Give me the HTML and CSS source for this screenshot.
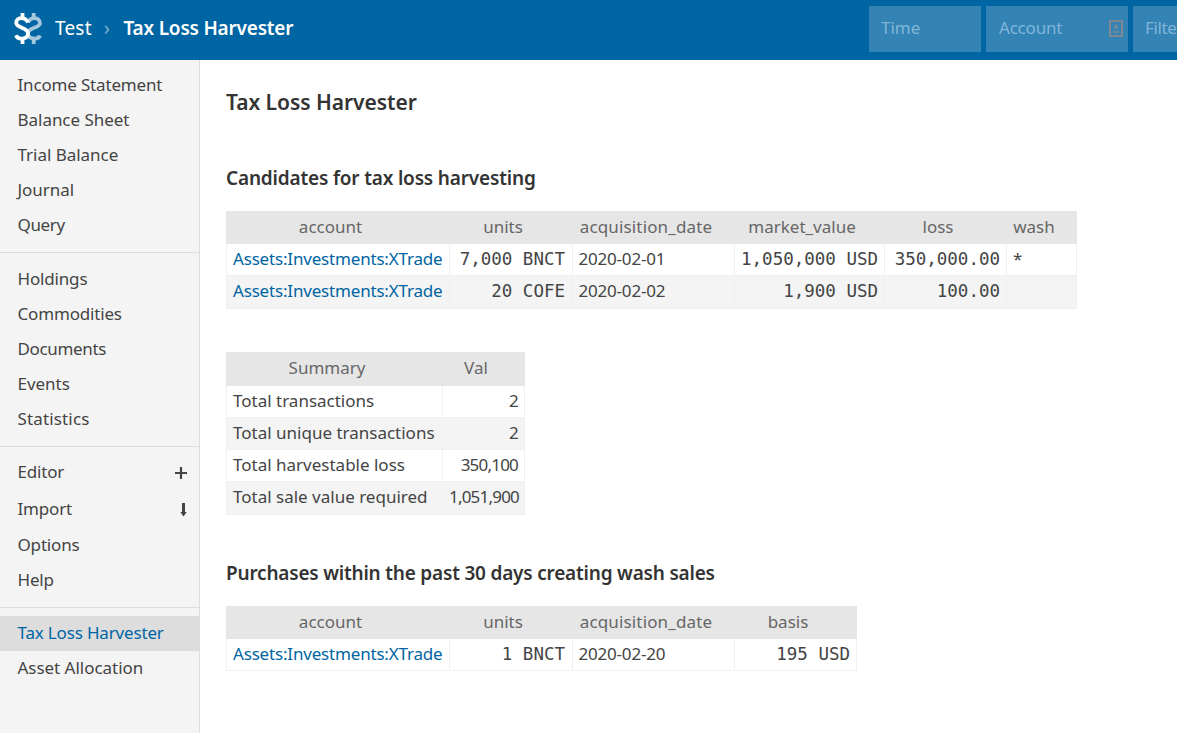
FILE: index.html
```html
<!DOCTYPE html>
<html lang="en">
<head>
<meta charset="utf-8">
<title>Tax Loss Harvester - Test</title>
<link rel="stylesheet" href="styles.css">
</head>
<body>
<header class="topbar">
  <svg class="logo" viewBox="0 0 28 31" width="28" height="31" fill="none" stroke-width="3.8">
    <g class="logo-back"><path d="M19.7 0v6M19.7 25v6"/><path d="M26 10C25 3.800 17 3.500 14 9.500M26 10C26 15.500 13.800 14 13.800 20.500C13.800 26 24 27.500 26 22.500"/></g>
    <g class="logo-front"><path d="M8.500 0v6M8.500 25v6"/><path d="M14 9.500C11 3.500 2.200 4 2.200 9.800C2.200 15.500 14 14 14 20.500C14 26.500 4 27.500 2 22.300"/></g>
  </svg>
  <h1 class="crumbs"><span class="ledger">Test</span><span class="sep">›</span><strong class="current">Tax Loss Harvester</strong></h1>
  <form class="filters">
    <div class="field time">Time</div>
    <div class="field account-field"><span>Account</span>
      <svg class="autofill" width="16" height="20" viewBox="0 0 16 20" fill="none" stroke="#7f8890" stroke-width="2"><path d="M2 2h12v15H2z"/><path d="M5 13h6" stroke-width="1.500"/><path d="M8 4.500l2.500 5h-5z" fill="#7f8890" stroke="none"/></svg>
    </div>
    <div class="field filter-field">Filte</div>
  </form>
</header>
<div class="shell">
  <aside class="sidebar">
    <ul class="group first">
      <li>Income Statement</li><li class="even">Balance Sheet</li><li class="even">Trial Balance</li><li class="even">Journal</li><li class="tight">Query</li>
    </ul>
    <ul class="group">
      <li>Holdings</li><li>Commodities</li><li class="tight">Documents</li><li class="even">Events</li><li class="loose">Statistics</li>
    </ul>
    <ul class="group">
      <li class="tall editor">Editor<svg width="12" height="12" viewBox="0 0 12 12" stroke="#444" stroke-width="2.200"><path d="M0 6h12M6 0v12"/></svg></li>
      <li class="tall import">Import<svg width="7" height="14" viewBox="0 0 7 14" fill="#444"><path d="M2 0h3v9H6.700L3.500 13.500.3 9H2z"/></svg></li>
      <li>Options</li><li>Help</li>
    </ul>
    <ul class="group last">
      <li class="selected">Tax Loss Harvester</li><li class="even">Asset Allocation</li>
    </ul>
  </aside>
  <main class="content">
    <h2 class="title">Tax Loss Harvester</h2>
    <h3 class="heading h-candidates">Candidates for tax loss harvesting</h3>
    <table class="report candidates">
      <colgroup><col class="c-account"><col class="c-units"><col class="c-date"><col class="c-value"><col class="c-loss"><col class="c-wash"></colgroup>
      <thead><tr><th>account</th><th class="units">units</th><th class="wide">acquisition_date</th><th>market_value</th><th>loss</th><th>wash</th></tr></thead>
      <tbody>
        <tr><td class="link">Assets:Investments:XTrade</td><td class="num units">7,000 BNCT</td><td class="date">2020-02-01</td><td class="num">1,050,000 USD</td><td class="num">350,000.00</td><td>*</td></tr>
        <tr><td class="link">Assets:Investments:XTrade</td><td class="num units">20 COFE</td><td class="date">2020-02-02</td><td class="num">1,900 USD</td><td class="num">100.00</td><td></td></tr>
      </tbody>
    </table>
    <table class="report summary">
      <colgroup><col class="c-label"><col class="c-val"></colgroup>
      <thead><tr><th>Summary</th><th>Val</th></tr></thead>
      <tbody>
        <tr><td>Total transactions</td><td class="right">2</td></tr>
        <tr><td>Total unique transactions</td><td class="right">2</td></tr>
        <tr><td>Total harvestable loss</td><td class="right">350,100</td></tr>
        <tr><td>Total sale value required</td><td class="right">1,051,900</td></tr>
      </tbody>
    </table>
    <h3 class="heading h-purchases">Purchases within the past 30 days creating wash sales</h3>
    <table class="report purchases">
      <colgroup><col class="c-account"><col class="c-units"><col class="c-date"><col class="c-basis"></colgroup>
      <thead><tr><th>account</th><th class="units">units</th><th class="wide">acquisition_date</th><th>basis</th></tr></thead>
      <tbody>
        <tr><td class="link">Assets:Investments:XTrade</td><td class="num units">1 BNCT</td><td class="date">2020-02-20</td><td class="num">195 USD</td></tr>
      </tbody>
    </table>
  </main>
</div>
</body>
</html>
```
FILE: styles.css
```css
* { box-sizing: border-box; }
body { margin: 0; height: 733px; overflow: hidden; font: 17px/24px "Noto Sans", sans-serif; color: #444; background: #fff; display: flex; flex-direction: column; }
.topbar { height: 60px; flex: none; background: #0065a3; color: #fff; display: flex; align-items: flex-start; overflow: hidden; }
.logo { margin: 13px 0 0 14px; flex: none; }
.logo-back { stroke: #a6c6dd; }
.logo-front { stroke: #fff; }
.crumbs { margin: 15px 0 0 13px; font-size: 19px; line-height: 26px; font-weight: 400; white-space: nowrap; flex: none; width: 260px; display: flex; }
.ledger { width: 49px; letter-spacing: .2px; }
.sep { width: 19.5px; color: #80b2d1; }
.current { font-weight: 600; letter-spacing: -.2px; }
.filters { margin: 6px 0 0 554px; display: flex; gap: 5px; flex: none; }
.field { height: 46px; padding: 10px 12px; background: #3383b5; color: #80b5d7; white-space: nowrap; display: flex; justify-content: space-between; }
.time { width: 112px; }
.account-field { width: 142px; padding-right: 4px; padding-left: 13px; letter-spacing: -.2px; }
.filter-field { width: 44px; padding-right: 0; letter-spacing: -.4px; }
.autofill { margin-top: 3px; }
.shell { flex: 1; display: flex; min-height: 0; }
.sidebar { width: 200px; flex: none; background: #f4f4f4; border-right: 1px solid #ddd; letter-spacing: -.17px; }
.group { list-style: none; margin: 0; padding: 8px 0 10px; border-bottom: 1px solid #ddd; }
.group.first { padding-top: 7px; }
.group.last { border-bottom: 0; }
.group li { height: 35px; line-height: 33px; padding: 0 12px 0 17.5px; display: flex; justify-content: space-between; align-items: center; }
.group li.even { letter-spacing: -.03px; }
.group li.tight { letter-spacing: -.35px; }
.group li.loose { letter-spacing: .15px; }
.group li.tall { height: 36px; }
.group li.editor { padding-bottom: 3px; }
.group li.import { padding-bottom: 2px; }
.group li svg { margin-top: 3px; }
.group.last li { padding-bottom: 2px; }
.group li.selected { background: #ddd; color: #0065a3; }
.content { flex: 1; padding: 27px 0 0 26px; }
.title { margin: 0; font-size: 21px; line-height: 30px; font-weight: 600; color: #333; letter-spacing: -.05px; }
.heading { margin: 0; font-size: 19px; line-height: 28px; font-weight: 600; color: #333; white-space: nowrap; letter-spacing: -.17px; }
.h-candidates { margin: 47px 0 19px; }
.h-purchases { margin: 44px 0 19px; letter-spacing: -.2px; }
.report { table-layout: fixed; border-collapse: separate; border-spacing: 0; border-left: 1px solid #f0f0f0; white-space: nowrap; }
.candidates { width: 851px; margin-bottom: 43px; }
.summary { width: 299px; }
.purchases { width: 631px; }
.c-account { width: 223px; } .c-units { width: 123px; } .c-date { width: 162px; } .c-value { width: 150px; } .c-loss { width: 122px; } .c-wash { width: 70px; }
.c-label { width: 216px; } .c-val { width: 82px; } .c-basis { width: 122px; }
.report th { height: 33px; padding: 0 22px 2px 6px; font-weight: 400; color: #666; background: #e6e6e6; box-shadow: -1px 0 #e6e6e6; }
.report th.wide { letter-spacing: .15px; }
.report th.units { padding-right: 23px; }
.summary th { height: 34px; }
.report td { height: 32px; padding: 0 6px 2px; border: solid #f0f0f0; border-width: 0 1px 1px 0; }
.candidates tbody tr:last-child td, .summary tbody tr:last-child td { height: 33px; padding-bottom: 3px; }
.report tbody tr:nth-child(even) { background: #f4f4f4; }
.report .link { color: #0065a3; letter-spacing: -.18px; }
.report .date { padding-left: 5.5px; letter-spacing: -.2px; }
.report .num { text-align: right; font: 17.5px/24px "DejaVu Sans Mono", monospace; }
.report td.units { padding-right: 7px; }
.report .right { text-align: right; letter-spacing: -.8px; }
```
